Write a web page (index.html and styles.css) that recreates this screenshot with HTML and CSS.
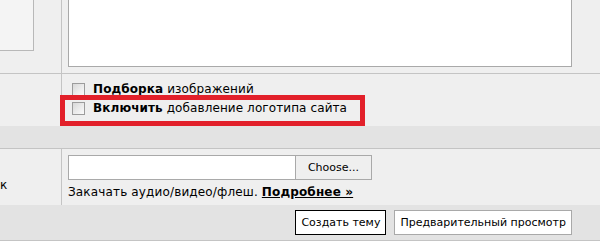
FILE: index.html
```html
<!DOCTYPE html>
<html lang="ru">
<head>
<meta charset="utf-8">
<title>Форма</title>
<link rel="stylesheet" href="styles.css">
</head>
<body>
<div class="form">
  <div class="row row-a">
    <div class="cell left"><div class="leftbox"></div></div>
    <div class="cell right"><div class="textarea"></div></div>
  </div>
  <div class="row row-b">
    <div class="cell left"></div>
    <div class="cell right opts">
      <label class="opt"><span class="check"></span><span><b>Подборка</b> изображений</span></label>
      <label class="opt"><span class="check"></span><span><b>Включить</b> добавление логотипа сайта</span></label>
      <div class="highlight"></div>
    </div>
  </div>
  <div class="band"></div>
  <div class="row row-d">
    <div class="cell left label-cell"><span class="cut">к</span></div>
    <div class="cell right">
      <div class="file">
        <div class="file-field"></div>
        <div class="file-btn">Choose...</div>
      </div>
      <div class="hint">Закачать аудио/видео/флеш. <a class="more" href="#">Подробнее »</a></div>
    </div>
  </div>
  <div class="actions">
    <button class="btn btn-default" type="button">Создать тему</button>
    <button class="btn" type="button">Предварительный просмотр</button>
  </div>
</div>
</body>
</html>
```

FILE: styles.css
```css
html, body {
  margin: 0;
  padding: 0;
  background: #ffffff;
}
body {
  font-family: "DejaVu Sans", Verdana, sans-serif;
  font-size: 12px;
  color: #000;
  overflow: hidden;
}
.form {
  background: #efefef;
}
.row {
  display: grid;
  grid-template-columns: 62px 1fr;
  border-bottom: 1px solid #c4c4c4;
}
.cell.left {
  border-right: 1px solid #c4c4c4;
}
.row-a {
  height: 73px;
}
.leftbox {
  width: 33px;
  height: 50px;
  background: #f4f4f4;
  border-right: 1px solid #b8b8b8;
  border-bottom: 1px solid #b8b8b8;
}
.row-a .cell.right {
  display: flex;
  flex-direction: column;
  justify-content: flex-end;
  padding: 0 28px 6px 6px;
}
.textarea {
  height: 66px;
  background: #fff;
  border: 1px solid #a9a9a9;
  border-top: 0;
}
.row-b {
  height: 52px;
  border-bottom: 0;
}
.opts {
  position: relative;
  padding: 6px 0 0 10px;
}
.opt {
  display: flex;
  align-items: center;
  height: 19px;
  line-height: 19px;
  white-space: nowrap;
  letter-spacing: 0.1px;
}
.check {
  width: 11px;
  height: 11px;
  border: 1px solid #9c9c9c;
  background: linear-gradient(135deg, #d8d8d8 0%, #eeeeee 60%, #fafafa 100%);
  margin-right: 8px;
  flex: none;
}
.highlight {
  position: absolute;
  left: -2px;
  top: 21px;
  width: 295px;
  height: 21px;
  border: 5px solid #e2202a;
  pointer-events: none;
}
.band {
  height: 22px;
  background: #e3e3e3;
  border-bottom: 1px solid #c4c4c4;
}
.row-d {
  height: 56px;
  border-bottom: 0;
}
.label-cell {
  padding-top: 27px;
  line-height: 19px;
}
.row-d .cell.right {
  padding: 6px 0 0 6px;
}
.file {
  display: flex;
  width: 304px;
  height: 25px;
  margin-bottom: 3px;
}
.file-field {
  flex: 1;
  background: #fff;
  border: 1px solid #a9a9a9;
  border-right: 0;
}
.file-btn {
  width: 75px;
  border: 1px solid #a9a9a9;
  background: #efefef;
  display: flex;
  align-items: center;
  justify-content: center;
  font-size: 11px;
  line-height: 1;
}
.hint {
  line-height: 19px;
  white-space: nowrap;
  letter-spacing: 0.15px;
}
.more {
  color: #000;
  font-weight: bold;
  text-decoration: underline;
}
.actions {
  height: 36px;
  box-sizing: border-box;
  background: #e3e3e3;
  border-bottom: 1px solid #c4c4c4;
  display: flex;
  justify-content: flex-end;
  align-items: flex-start;
  gap: 8px;
  padding: 5px 28px 0 0;
}
.btn {
  font-family: "DejaVu Sans", Verdana, sans-serif;
  font-size: 11px;
  height: 25px;
  padding: 0 5px;
  background: #fff;
  color: #000;
  border: 1px solid #a9a9a9;
  border-radius: 0;
  margin: 0;
}
.btn-default {
  border-color: #000;
}
```
